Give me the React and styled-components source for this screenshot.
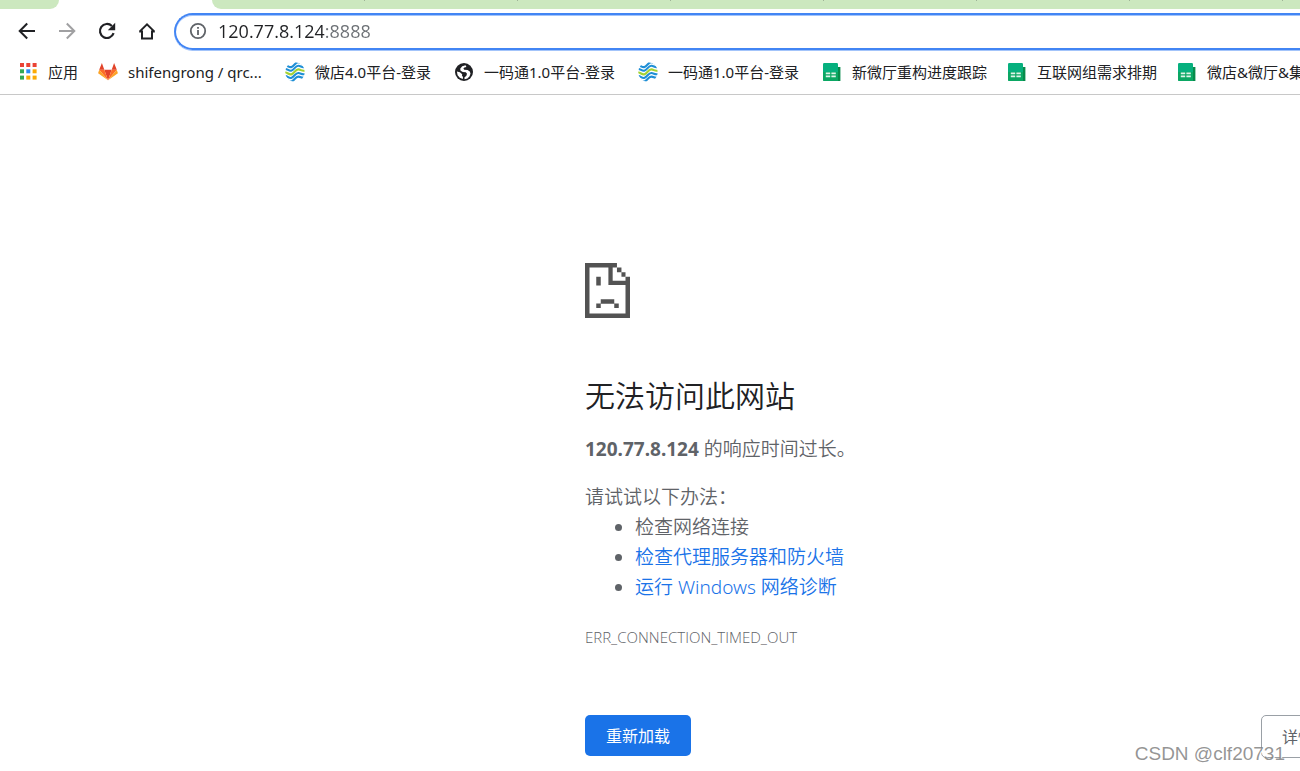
import styled, { createGlobalStyle } from 'styled-components';

const GlobalStyle = createGlobalStyle`
  * {
    box-sizing: border-box;
  }
  body {
    margin: 0;
    background: #ffffff;
    color: #202124;
    font-family: 'Noto Sans', 'Noto Sans CJK SC', sans-serif;
    overflow-x: hidden;
  }
`;

const Page = styled.div`
  position: relative;
  overflow: hidden;
`;

const TabStrip = styled.div`
  display: flex;
  height: 9px;
  overflow: hidden;
`;

const LeadingTab = styled.div`
  flex: none;
  width: 59px;
  background: #cce8bf;
  border-bottom-right-radius: 9px;
`;

const ActiveTab = styled.div`
  flex: none;
  width: 153px;
`;

const TabGroup = styled.div`
  display: flex;
  flex: 1;
  min-width: 0;
  background: #cce8bf;
  border-bottom-left-radius: 9px;
`;

const Tab = styled.div`
  flex: none;
  width: 153px;
  height: 1px;
  border-right: 1px solid #9fb397;
`;

const Toolbar = styled.div`
  display: flex;
  align-items: flex-start;
  padding: 4px 0 2px 7px;
`;

const ToolButton = styled.button`
  display: flex;
  flex: none;
  align-items: center;
  justify-content: center;
  width: 40px;
  height: 36px;
  padding: 0;
  border: 0;
  background: none;
  color: ${({ disabled }) => (disabled ? '#a0a0a2' : '#202124')};
`;

const AddressBar = styled.form`
  display: flex;
  flex: 1;
  align-items: center;
  gap: 11px;
  height: 37px;
  margin-left: 7px;
  padding: 0 0 1px 13px;
  border: 2px solid #4285f4;
  border-right: 0;
  border-radius: 19px 0 0 19px;
  box-shadow: 0 1px 0 #a3c4fa, inset 0 1px 0 #a3c4fa;
  color: #5f6368;
`;

/* the host is dark and the port after it is grey */
const AddressInput = styled.input`
  flex: 1;
  min-width: 0;
  padding: 0;
  border: 0;
  outline: 0;
  font-family: 'Open Sans', sans-serif;
  font-size: 18px;
  line-height: 24px;
  color: transparent;
  background: linear-gradient(to right, #202124 106px, #6b6f74 106px);
  background-clip: text;
  -webkit-background-clip: text;
`;

const BookmarkBar = styled.nav`
  display: flex;
  align-items: center;
  gap: 20px;
  height: 43px;
  padding: 0 0 2px 18px;
  border-bottom: 1px solid #c8c8c8;
`;

const BookmarkLink = styled.a`
  display: flex;
  flex: none;
  align-items: center;
  gap: 10px;
  min-width: ${({ $width }) => $width}px;
  font-size: 15px;
  line-height: 20px;
  color: #202124;
  text-decoration: none;
  white-space: nowrap;
  svg {
    flex: none;
  }
`;

const ErrorPage = styled.main`
  width: 750px;
  margin-left: 45%;
  padding: 168px 0 12px;
  color: #5f6368;
  font-size: 19px;
  font-weight: 350;
  line-height: 30px;
  > svg {
    display: block;
  }
`;

const Title = styled.h1`
  margin: 60px 0 20px;
  color: #202124;
  font-size: 30px;
  font-weight: 350;
  line-height: 36px;
`;

const Summary = styled.p`
  margin: 0 0 18px;
  strong {
    font-weight: 700;
  }
`;

const Suggestions = styled.div`
  p {
    margin: 0;
  }
  ul {
    margin: 0;
    padding-left: 50px;
  }
  a {
    color: #1a73e8;
    text-decoration: none;
  }
`;

const ErrorCode = styled.div`
  margin-top: 25px;
  font-family: 'Open Sans', sans-serif;
  font-size: 15px;
  line-height: 20px;
`;

const Buttons = styled.div`
  display: flex;
  align-items: flex-start;
  justify-content: space-between;
  margin-top: 68px;
`;

const Button = styled.button`
  height: ${({ $primary }) => ($primary ? '41px' : '43px')};
  padding: 0 ${({ $primary }) => ($primary ? '21px' : '20px')};
  border: ${({ $primary }) => ($primary ? '0' : '1px solid #9aa0a6')};
  border-radius: 5px;
  background: ${({ $primary }) => ($primary ? '#1a73e8' : '#ffffff')};
  color: ${({ $primary }) => ($primary ? '#ffffff' : '#5f6368')};
  font-family: inherit;
  font-size: 16px;
  line-height: 20px;
`;

const Watermark = styled.div`
  position: absolute;
  right: 15px;
  bottom: 4px;
  color: rgba(130, 130, 130, 0.85);
  font-family: 'Liberation Sans', sans-serif;
  font-size: 19px;
  line-height: 24px;
  text-shadow: 1px 1px 0 #ffffff;
`;

const BackIcon = () => (
  <svg width="20" height="20" viewBox="0 0 20 20" fill="none" stroke="currentColor" strokeWidth="2">
    <path d="M18 10H3M10.2 2.5L2.7 10l7.5 7.5" />
  </svg>
);

const ForwardIcon = () => (
  <svg width="20" height="20" viewBox="0 0 20 20" fill="none" stroke="currentColor" strokeWidth="2">
    <path d="M2 10h15M9.8 2.5l7.5 7.5-7.5 7.5" />
  </svg>
);

const ReloadIcon = () => (
  <svg width="20" height="20" viewBox="0 0 20 20">
    <path
      d="M16.6 12.2A7 7 0 1 1 14.9 5"
      fill="none"
      stroke="currentColor"
      strokeWidth="2.2"
    />
    <path d="M18.2 1.8v7.4h-7.4z" fill="currentColor" />
  </svg>
);

const HomeIcon = () => (
  <svg width="20" height="20" viewBox="0 0 20 20" fill="none" stroke="currentColor" strokeWidth="2">
    <path d="M2.6 10.6L10 3.4l7.4 7.2M2.2 10.4h3M17.8 10.4h-3M5 9.4v8h10v-8" />
  </svg>
);

const InfoIcon = () => (
  <svg width="18" height="18" viewBox="0 0 18 18">
    <circle cx="9" cy="9" r="7.2" fill="none" stroke="currentColor" strokeWidth="1.8" />
    <path d="M8.1 8h1.8v5H8.1zM8.1 5h1.8v1.8H8.1z" fill="currentColor" />
  </svg>
);

const appColors = [
  ['#ea4335', '#ea4335', '#ea4335'],
  ['#34a853', '#2a8af6', '#fbaa05'],
  ['#34a853', '#fbaa05', '#fbaa05'],
];

const AppsIcon = () => (
  <svg width="20" height="20" viewBox="0 0 20 20">
    {appColors.map((row, y) =>
      row.map((color, x) => (
        <rect
          key={`${x}-${y}`}
          x={2 + x * 6.3}
          y={1 + y * 6.3}
          width="4"
          height="4"
          fill={color}
        />
      ))
    )}
  </svg>
);

const GitlabIcon = () => (
  <svg width="20" height="20" viewBox="0 0 20 20">
    <path d="M10 18.3L6.3 7.8h7.4z" fill="#e24329" />
    <path d="M10 18.3L1.2 7.8h5.1zM10 18.3l8.8-10.5h-5.1z" fill="#fc6d26" />
    <path d="M1.2 7.8L.1 11.2l9.9 7.1zM18.8 7.8l1.1 3.4-9.9 7.1z" fill="#fca326" />
    <path d="M1.2 7.8L3.9.9l2.4 6.9zM18.8 7.8L16.1.9l-2.4 6.9z" fill="#e24329" />
  </svg>
);

const waves = [-7.2, -3.6, 0, 3.6, 7.2];

const WaveIcon = () => (
  <svg width="20" height="20" viewBox="0 0 20 20" fill="none" strokeWidth="2.1">
    <clipPath id="wave-disc">
      <circle cx="10" cy="10" r="9.8" />
    </clipPath>
    <g clipPath="url(#wave-disc)">
      {waves.map((dy) => (
        <path
          key={dy}
          d={`M0 ${10.6 + dy}c2.6-.4 4 2.6 6.6 1.6 2.8-1.2 4-5 6.8-4.8 2.6.2 3.8 2.2 6.6 1`}
          stroke={dy === 0 ? '#a4d233' : '#1f8fd6'}
        />
      ))}
    </g>
  </svg>
);

const GlobeIcon = () => (
  <svg width="20" height="20" viewBox="0 0 20 20">
    <circle cx="10" cy="10" r="9" fill="#202124" />
    <path
      d="M11.6 3.2L8.2 4.2 6.2 6.8l.4 2 2.2 1.1 3 .4 1.2 1.4-.6 2-2 1.9.2 1.6 2.8-.8 2.2-2.2.9-2.6-.7-2.2-2.2-1.3-3.4-.4-.8-1.1 1-1.2 2-.3z"
      fill="#ffffff"
    />
    <path d="M2.9 9.6l3 .6 2.3 2-.2 1.6 1 1.2-.2 2-3-1.2-2.2-2.6z" fill="#ffffff" />
  </svg>
);

const SheetIcon = () => (
  <svg width="20" height="20" viewBox="0 0 20 20">
    <path d="M14 5h4.4v14H14z" fill="#078b4b" />
    <path d="M2.2 1h12.6q1.2 0 1.2 1.2V19H2.2Q1 19 1 17.8V2.2Q1 1 2.2 1z" fill="#06b07e" />
    <path d="M1 10h15v9H2.2Q1 19 1 17.8z" fill="#0ba763" />
    <path
      d="M3.8 11.4h4.4M9.4 11.4h4.4M3.8 14.4h4.4M9.4 14.4h4.4"
      stroke="#dff5ea"
      strokeWidth="1.6"
    />
  </svg>
);

const SadPageIcon = () => (
  <svg width="45" height="55" viewBox="0 0 20 24" preserveAspectRatio="none" fill="#535353">
    <path d="M0 0h14.2v2H2v20h16V9.6h-7.6V2h1.9v5.7H18V6h2v18H0z" />
    <path d="M14.2 2h2v2h-2zM16.2 4H18v2h-1.8zM5 6h2v3.8H5zM7 15.8h6v2H7zM5 17.7h2v1.9H5zM13 17.7h2v1.9h-2z" />
  </svg>
);

const bookmarks = [
  { Icon: AppsIcon, label: '应用', width: 60 },
  { Icon: GitlabIcon, label: 'shifengrong / qrc...', width: 167 },
  { Icon: WaveIcon, label: '微店4.0平台-登录', width: 149 },
  { Icon: GlobeIcon, label: '一码通1.0平台-登录', width: 164 },
  { Icon: WaveIcon, label: '一码通1.0平台-登录', width: 164 },
  { Icon: SheetIcon, label: '新微厅重构进度跟踪', width: 165 },
  { Icon: SheetIcon, label: '互联网组需求排期', width: 150 },
  { Icon: SheetIcon, label: '微店&微厅&集', width: 120 },
];

export default function App() {
  return (
    <Page>
      <GlobalStyle />
      <TabStrip>
        <LeadingTab />
        <ActiveTab />
        <TabGroup>
          {[...Array(8)].map((_, i) => (
            <Tab key={i} />
          ))}
        </TabGroup>
      </TabStrip>
      <Toolbar>
        <ToolButton aria-label="后退">
          <BackIcon />
        </ToolButton>
        <ToolButton aria-label="前进" disabled>
          <ForwardIcon />
        </ToolButton>
        <ToolButton aria-label="重新加载">
          <ReloadIcon />
        </ToolButton>
        <ToolButton aria-label="主页">
          <HomeIcon />
        </ToolButton>
        <AddressBar>
          <InfoIcon />
          <AddressInput aria-label="地址" defaultValue="120.77.8.124:8888" />
        </AddressBar>
      </Toolbar>
      <BookmarkBar>
        {bookmarks.map(({ Icon, label, width }, i) => (
          <BookmarkLink key={i} href="#" $width={width}>
            <Icon />
            <span>{label}</span>
          </BookmarkLink>
        ))}
      </BookmarkBar>
      <ErrorPage>
        <SadPageIcon />
        <Title>无法访问此网站</Title>
        <Summary>
          <strong>120.77.8.124</strong> 的响应时间过长。
        </Summary>
        <Suggestions>
          <p>请试试以下办法：</p>
          <ul>
            <li>检查网络连接</li>
            <li>
              <a href="#">检查代理服务器和防火墙</a>
            </li>
            <li>
              <a href="#">运行 Windows 网络诊断</a>
            </li>
          </ul>
        </Suggestions>
        <ErrorCode>ERR_CONNECTION_TIMED_OUT</ErrorCode>
        <Buttons>
          <Button $primary>重新加载</Button>
          <Button>详情</Button>
        </Buttons>
      </ErrorPage>
      <Watermark>CSDN @clf20731</Watermark>
    </Page>
  );
}
